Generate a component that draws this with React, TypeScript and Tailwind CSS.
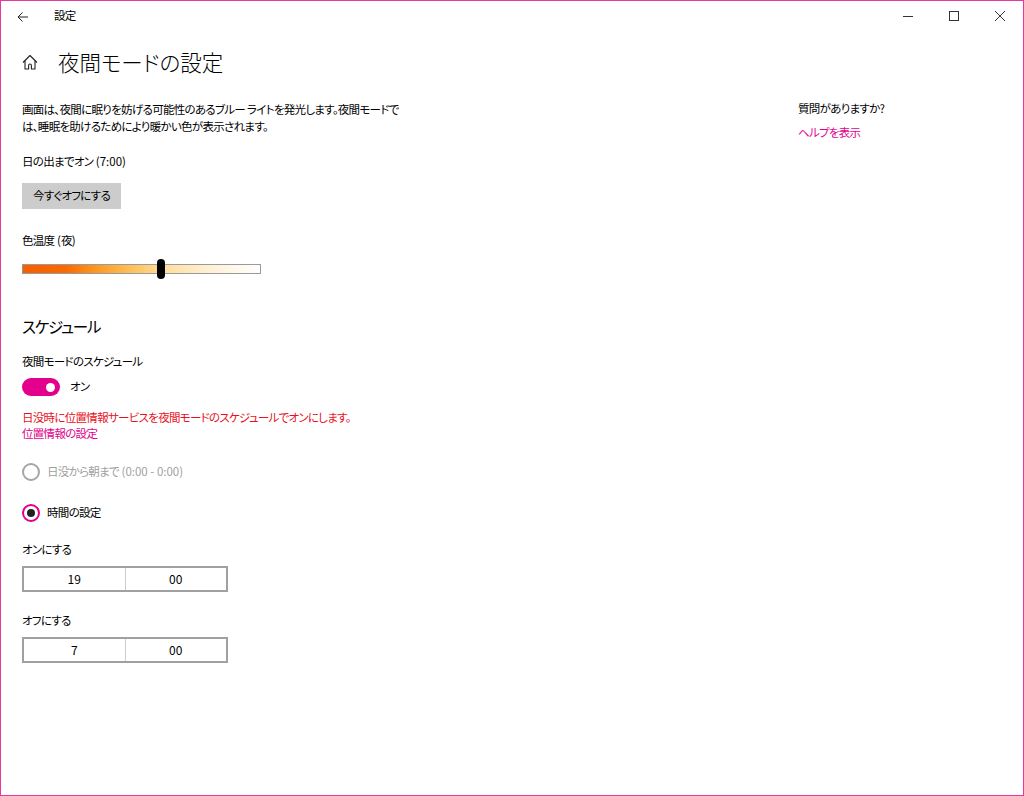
import React from "react";

const font = "font-['Noto_Sans_CJK_JP','Noto_Sans',sans-serif] [font-feature-settings:'palt']";
const t = "text-[11.5px] tracking-[-0.7px]";
const L = ({ children }: { children: React.ReactNode }) => <span className="tracking-normal">{children}</span>;

function TimeBox({ h, m }: { h: string; m: string }) {
  return (
    <div className="mt-[8px] flex h-[26px] w-[206px] border-2 border-[#a0a0a0] text-[12px] text-black">
      <div className="flex flex-1 items-center justify-center border-r border-[#cccccc]">{h}</div>
      <div className="flex flex-1 items-center justify-center">{m}</div>
    </div>
  );
}

export default function App() {
  return (
    <div className={`${font} box-border flex h-[796px] w-[1024px] flex-col overflow-hidden border border-[#e5399e] bg-white text-black`}>
      {/* title bar */}
      <div className="flex h-[30px] items-center">
        <div className="flex w-[44px] items-center justify-center pt-[1px]">
          <svg width="12" height="12" viewBox="0 0 12 12" fill="none" stroke="#222" strokeWidth="1">
            <path d="M11 6H1M5.5 1.5L1 6l4.5 4.5" />
          </svg>
        </div>
        <div className={`ml-[9px] ${t} leading-none`}>設定</div>
        <div className="flex-1" />
        <div className="flex h-full w-[46px] items-center justify-center">
          <svg width="10" height="10" viewBox="0 0 10 10"><path d="M0 5.5h10" stroke="#333" strokeWidth="1" /></svg>
        </div>
        <div className="flex h-full w-[46px] items-center justify-center">
          <svg width="10" height="10" viewBox="0 0 10 10"><rect x="0.5" y="0.5" width="9" height="9" fill="none" stroke="#333" strokeWidth="1" /></svg>
        </div>
        <div className="flex h-full w-[46px] items-center justify-center">
          <svg width="10" height="10" viewBox="0 0 10 10"><path d="M0 0L10 10M10 0L0 10" stroke="#333" strokeWidth="1" /></svg>
        </div>
      </div>

      {/* heading */}
      <div className="flex h-[62px] items-center pl-[21px]">
        <svg width="16" height="16" viewBox="0 0 16 16" fill="none" stroke="#222" strokeWidth="1.1" strokeLinejoin="round">
          <path d="M1 8.5L8 1.5l7 7" />
          <path d="M3 6.8V15h3.6v-3.6a1.4 1.4 0 0 1 2.8 0V15H13V6.8" />
        </svg>
        <div className="ml-[20px] text-[21.5px] font-light leading-none">夜間モードの設定</div>
      </div>

      <div className="flex pl-[21px]">
        <div className="flex w-[776px] flex-col items-start">
          <div className={`mt-[8px] ${t} leading-[17px]`}>
            画面は、夜間に眠りを妨げる可能性のあるブルー ライトを発光します。夜間モードで
            <br />
            は、睡眠を助けるためにより暖かい色が表示されます。
          </div>
          <div className={`mt-[18px] ${t} leading-[17px]`}>日の出までオン<L>&nbsp;(7:00)</L></div>
          <div className={`mt-[13px] flex h-[26px] w-[99px] items-center justify-center bg-[#cccccc] ${t}`}>今すぐオフにする</div>
          <div className={`mt-[23px] ${t} leading-[17px]`}>色温度<L>&nbsp;(</L>夜<L>)</L></div>
          <div className="relative mt-[10px] flex h-[20px] w-[239px] items-center">
            <div className="h-[10px] w-full border border-[#9a9a9a] bg-[linear-gradient(to_right,#f75e00_0%,#f86a00_18%,#fb9620_30%,#fdbf58_45%,#ffdf9f_60%,#fff1d8_80%,#ffffff_100%)]" />
            <div className="absolute left-[135px] top-0 h-[20px] w-[8px] rounded-full bg-black" />
          </div>

          <div className="mt-[35px] text-[15.5px] leading-[24px] tracking-[-1.2px]">スケジュール</div>
          <div className={`mt-[15px] ${t} leading-[17px]`}>夜間モードのスケジュール</div>
          <div className="mt-[7px] flex h-[20px] items-center">
            <div className="flex h-[18px] w-[38px] items-center justify-end rounded-full bg-[#e3008c] pr-[5px]">
              <div className="h-[9px] w-[9px] rounded-full bg-white" />
            </div>
            <div className={`ml-[10px] ${t}`}>オン</div>
          </div>
          <div className={`mt-[12px] ${t} leading-[16px] text-[#e81123]`}>日没時に位置情報サービスを夜間モードのスケジュールでオンにします。</div>
          <div className={`${t} leading-[16px] text-[#e3008c]`}>位置情報の設定</div>

          <div className="mt-[21px] flex h-[20px] items-center">
            <div className="h-[18px] w-[18px] rounded-full border-2 border-[#a6a6a6]" />
            <div className={`ml-[7px] ${t} text-[#a0a0a0]`}>日没から朝まで<L>&nbsp;(0:00 - 0:00)</L></div>
          </div>
          <div className="mt-[21px] flex h-[20px] items-center">
            <div className="flex h-[18px] w-[18px] items-center justify-center rounded-full border-2 border-[#e3008c]">
              <div className="h-[8px] w-[8px] rounded-full bg-[#222]" />
            </div>
            <div className={`ml-[7px] ${t}`}>時間の設定</div>
          </div>

          <div className={`mt-[18px] ${t} leading-[17px]`}>オンにする</div>
          <TimeBox h="19" m="00" />
          <div className={`mt-[20px] ${t} leading-[17px]`}>オフにする</div>
          <TimeBox h="7" m="00" />
        </div>

        <div className="flex flex-col">
          <div className={`mt-[7px] ${t} leading-[17px]`}>質問がありますか?</div>
          <div className={`mt-[7px] ${t} leading-[17px] text-[#e3008c]`}>ヘルプを表示</div>
        </div>
      </div>
    </div>
  );
}
